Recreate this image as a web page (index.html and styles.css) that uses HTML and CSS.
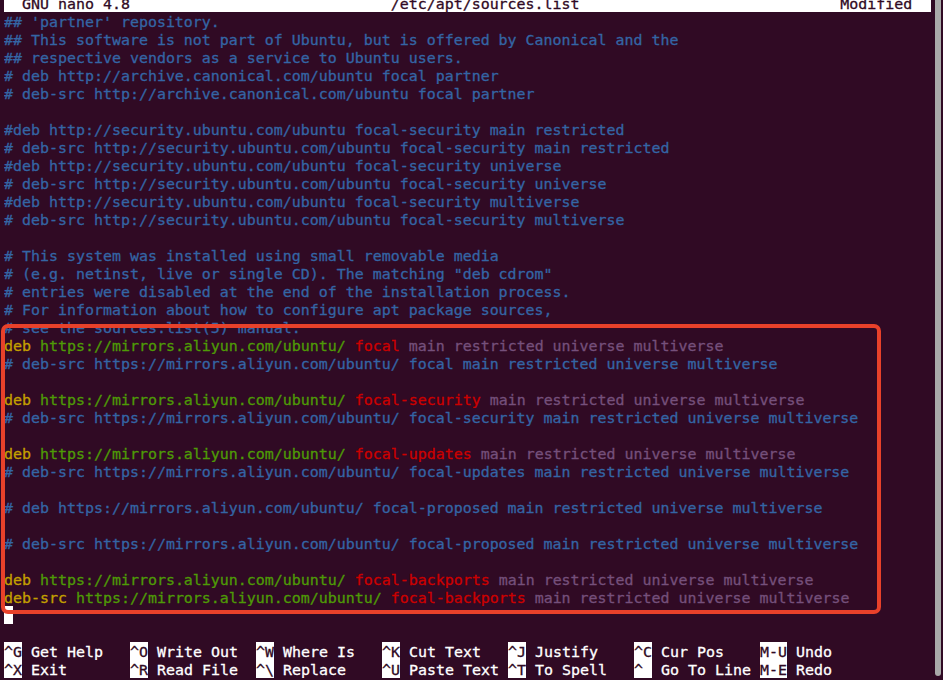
FILE: index.html
```html
<!DOCTYPE html>
<html>
<head>
<meta charset="utf-8">
<link rel="stylesheet" href="styles.css">
</head>
<body>
<div class="window">
  <div class="term">
    <div class="line title">  GNU nano 4.8                             /etc/apt/sources.list                             Modified  </div>
    <div class="line c">## 'partner' repository.</div>
    <div class="line c">## This software is not part of Ubuntu, but is offered by Canonical and the</div>
    <div class="line c">## respective vendors as a service to Ubuntu users.</div>
    <div class="line c"># deb http://archive.canonical.com/ubuntu focal partner</div>
    <div class="line c"># deb-src http://archive.canonical.com/ubuntu focal partner</div>
    <div class="line"></div>
    <div class="line c">#deb http://security.ubuntu.com/ubuntu focal-security main restricted</div>
    <div class="line c"># deb-src http://security.ubuntu.com/ubuntu focal-security main restricted</div>
    <div class="line c">#deb http://security.ubuntu.com/ubuntu focal-security universe</div>
    <div class="line c"># deb-src http://security.ubuntu.com/ubuntu focal-security universe</div>
    <div class="line c">#deb http://security.ubuntu.com/ubuntu focal-security multiverse</div>
    <div class="line c"># deb-src http://security.ubuntu.com/ubuntu focal-security multiverse</div>
    <div class="line"></div>
    <div class="line c"># This system was installed using small removable media</div>
    <div class="line c"># (e.g. netinst, live or single CD). The matching "deb cdrom"</div>
    <div class="line c"># entries were disabled at the end of the installation process.</div>
    <div class="line c"># For information about how to configure apt package sources,</div>
    <div class="line c"># see the sources.list(5) manual.</div>
    <div class="line"><span class="k">deb</span> <span class="u">https://mirrors.aliyun.com/ubuntu/</span> <span class="r">focal</span> <span class="p">main restricted universe multiverse</span></div>
    <div class="line c"># deb-src https://mirrors.aliyun.com/ubuntu/ focal main restricted universe multiverse</div>
    <div class="line"></div>
    <div class="line"><span class="k">deb</span> <span class="u">https://mirrors.aliyun.com/ubuntu/</span> <span class="r">focal-security</span> <span class="p">main restricted universe multiverse</span></div>
    <div class="line c"># deb-src https://mirrors.aliyun.com/ubuntu/ focal-security main restricted universe multiverse</div>
    <div class="line"></div>
    <div class="line"><span class="k">deb</span> <span class="u">https://mirrors.aliyun.com/ubuntu/</span> <span class="r">focal-updates</span> <span class="p">main restricted universe multiverse</span></div>
    <div class="line c"># deb-src https://mirrors.aliyun.com/ubuntu/ focal-updates main restricted universe multiverse</div>
    <div class="line"></div>
    <div class="line c"># deb https://mirrors.aliyun.com/ubuntu/ focal-proposed main restricted universe multiverse</div>
    <div class="line"></div>
    <div class="line c"># deb-src https://mirrors.aliyun.com/ubuntu/ focal-proposed main restricted universe multiverse</div>
    <div class="line"></div>
    <div class="line"><span class="k">deb</span> <span class="u">https://mirrors.aliyun.com/ubuntu/</span> <span class="r">focal-backports</span> <span class="p">main restricted universe multiverse</span></div>
    <div class="line"><span class="k">deb-src</span> <span class="u">https://mirrors.aliyun.com/ubuntu/</span> <span class="r">focal-backports</span> <span class="p">main restricted universe multiverse</span></div>
    <div class="line"><span class="cursor"> </span></div>
    <div class="line"></div>
    <div class="shortcuts">
      <div class="sc"><span class="key">^G</span> Get Help</div>
      <div class="sc"><span class="key">^O</span> Write Out</div>
      <div class="sc"><span class="key">^W</span> Where Is</div>
      <div class="sc"><span class="key">^K</span> Cut Text</div>
      <div class="sc"><span class="key">^J</span> Justify</div>
      <div class="sc"><span class="key">^C</span> Cur Pos</div>
      <div class="sc"><span class="key">M-U</span> Undo</div>
      <div class="sc"><span class="key">^X</span> Exit</div>
      <div class="sc"><span class="key">^R</span> Read File</div>
      <div class="sc"><span class="key">^\</span> Replace</div>
      <div class="sc"><span class="key">^U</span> Paste Text</div>
      <div class="sc"><span class="key">^T</span> To Spell</div>
      <div class="sc"><span class="key">^_</span> Go To Line</div>
      <div class="sc"><span class="key">M-E</span> Redo</div>
    </div>
    <div class="annotation"></div>
  </div>
  <div class="scrollbar"></div>
</div>
</body>
</html>
```
FILE: styles.css
```css
html, body {
  margin: 0;
  padding: 0;
  background: #300a24;
  overflow: hidden;
}
.window {
  width: 943px;
  height: 680px;
  display: flex;
  align-items: flex-start;
  background: #300a24;
  overflow: hidden;
}
.term {
  position: relative;
  width: 927px;
  margin-left: 4px;
  margin-top: -6px;
  font-family: "DejaVu Sans Mono", monospace;
  font-size: 14.95px;
  line-height: 20px;
  color: #ffffff;
  -webkit-text-stroke: 0.3px currentColor;
}
.line {
  height: 18px;
  white-space: pre;
  overflow: hidden;
}
.title {
  background: #ffffff;
  color: #300a24;
}
.c { color: #3465a4; }
.k { color: #c4a000; }
.u { color: #4e9a06; }
.r { color: #cc0000; }
.p { color: #75507b; }
.cursor {
  display: inline-block;
  width: 9px;
  height: 18px;
  background: #ffffff;
  vertical-align: top;
}
.shortcuts {
  display: grid;
  grid-template-columns: repeat(7, 126px);
  grid-auto-rows: 18px;
}
.sc {
  white-space: pre;
  color: #ffffff;
  height: 18px;
  overflow: hidden;
}
.key {
  display: inline-block;
  height: 18px;
  vertical-align: top;
  background: #ffffff;
  color: #300a24;
}
.annotation {
  position: absolute;
  left: -3px;
  top: 330px;
  width: 872px;
  height: 282px;
  border: 4px solid #e8412a;
  border-radius: 7px;
}
.scrollbar {
  width: 6px;
  height: 676px;
  margin-left: 4px;
  background: #a9a9a9;
  border-radius: 0 0 3px 3px;
}
```
